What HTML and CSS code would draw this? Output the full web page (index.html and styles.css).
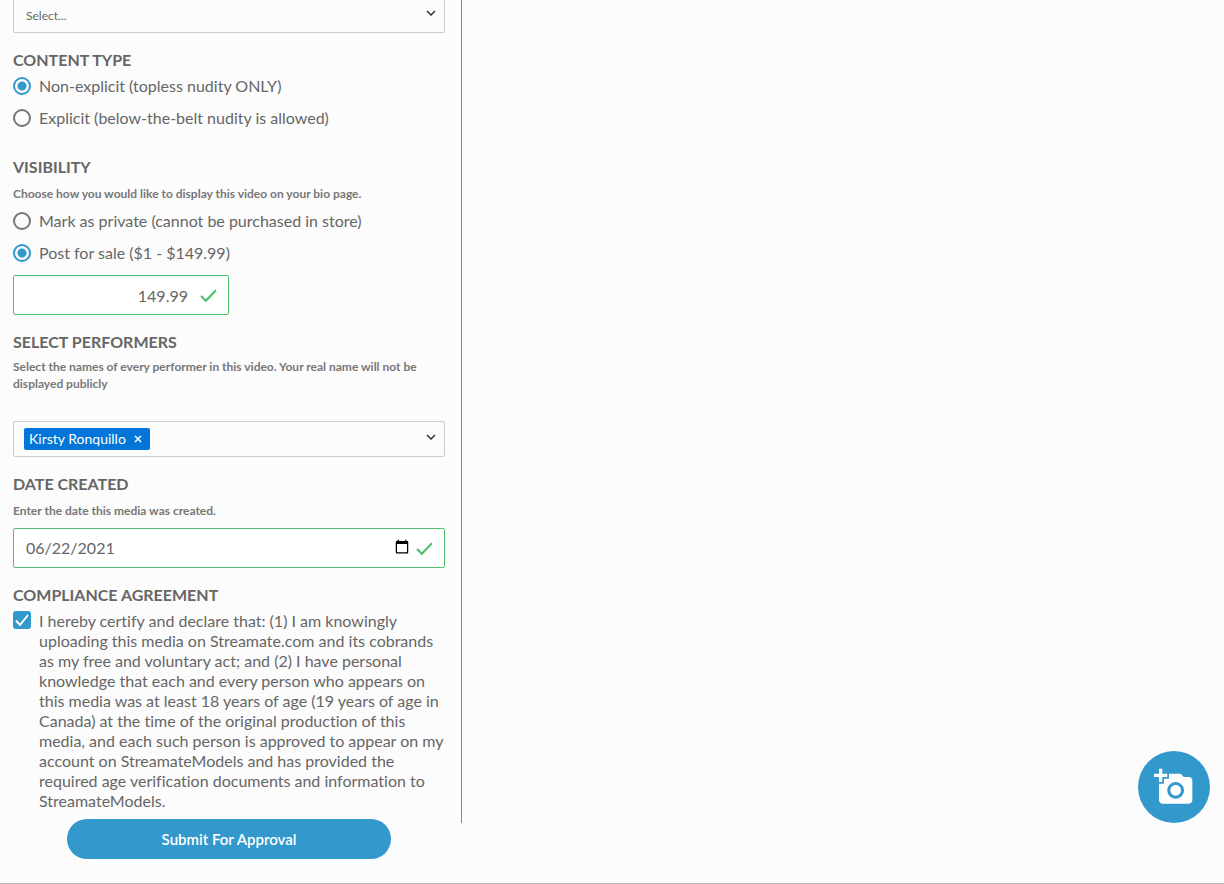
FILE: index.html
```html
<!DOCTYPE html>
<html lang="en">

<head>
  <meta charset="UTF-8">
  <meta name="viewport" content="width=device-width, initial-scale=1.0">
  <title>Upload Video</title>
  <link rel="stylesheet" href="styles.css">
</head>

<body>
  <form class="upload-form" id="upload-form">
    <div class="form-panel">
      <div class="select-wrap">
        <select class="select" id="category" aria-label="Category">
          <option>Select...</option>
        </select>
        <svg class="chevron" viewBox="0 0 10 6" aria-hidden="true"><path d="M1 1l4 4 4-4"/></svg>
      </div>

      <fieldset class="field field-content">
        <legend class="heading">CONTENT TYPE</legend>
        <div class="options">
          <label class="option"><input type="radio" name="content" checked> Non-explicit (topless nudity ONLY)</label>
          <label class="option"><input type="radio" name="content"> Explicit (below-the-belt nudity is allowed)</label>
        </div>
      </fieldset>

      <fieldset class="field">
        <legend class="heading">VISIBILITY</legend>
        <p class="hint">Choose how you would like to display this video on your bio page.</p>
        <div class="options">
          <label class="option"><input type="radio" name="visibility"> Mark as private (cannot be purchased in store)</label>
          <label class="option"><input type="radio" name="visibility" checked> Post for sale ($1 - $149.99)</label>
        </div>
        <div class="input-wrap price-wrap">
          <input class="input price" type="text" inputmode="decimal" value="149.99" aria-label="Price">
          <svg class="valid" viewBox="0 0 16 12" aria-hidden="true"><path d="M1 6.500l4.500 4.500L15 1"/></svg>
        </div>
      </fieldset>

      <div class="field field-performers">
        <label class="heading" for="performers">SELECT PERFORMERS</label>
        <p class="hint">Select the names of every performer in this video. Your real name will not be displayed publicly</p>
        <div class="select-wrap multi-select">
          <span class="chip">Kirsty Ronquillo
            <button class="chip-remove" type="button" aria-label="Remove Kirsty Ronquillo">
              <svg viewBox="0 0 8 8" aria-hidden="true"><path d="M1 1l6 6M7 1L1 7"/></svg>
            </button>
          </span>
          <input class="multi-input" type="text" id="performers">
          <svg class="chevron" viewBox="0 0 10 6" aria-hidden="true"><path d="M1 1l4 4 4-4"/></svg>
        </div>
      </div>

      <div class="field field-date">
        <label class="heading" for="date">DATE CREATED</label>
        <p class="hint">Enter the date this media was created.</p>
        <div class="input-wrap">
          <input class="input date" type="date" id="date" value="2021-06-22">
          <svg class="valid" viewBox="0 0 16 12" aria-hidden="true"><path d="M1 6.500l4.500 4.500L15 1"/></svg>
        </div>
      </div>

      <fieldset class="field field-agreement">
        <legend class="heading">COMPLIANCE AGREEMENT</legend>
        <label class="agreement">
          <span class="checkbox-wrap">
            <input type="checkbox" checked>
            <svg viewBox="0 0 18 18" aria-hidden="true"><path d="M3 9.500l4 4.500L15 4"/></svg>
          </span>
          <span>I hereby certify and declare that: (1) I am knowingly uploading this media on Streamate.com and its cobrands as my free and voluntary act; and (2) I have personal knowledge that each and every person who appears on this media was at least 18 years of age (19 years of age in Canada) at the time of the original production of this media, and each such person is approved to appear on my account on StreamateModels and has provided the required age verification documents and information to StreamateModels.</span>
        </label>
      </fieldset>
    </div>

    <div class="form-actions">
      <button class="submit" type="submit">Submit For Approval</button>
    </div>
  </form>

  <button class="add-photo" type="button" aria-label="Add photo">
    <svg viewBox="0 0 24 24" aria-hidden="true"><path d="M3 4V1h2v3h3v2H5v3H3V6H0V4h3zm3 6V7h3V4h7l1.830 2H21c1.100 0 2 .9 2 2v12c0 1.100-.9 2-2 2H5c-1.100 0-2-.9-2-2V10h3zm7 9c2.760 0 5-2.240 5-5s-2.240-5-5-5-5 2.240-5 5 2.240 5 5 5zm-3.200-5c0 1.770 1.430 3.200 3.200 3.200s3.200-1.430 3.200-3.200-1.430-3.200-3.200-3.200-3.200 1.430-3.200 3.200z"/></svg>
  </button>
</body>

</html>
```
FILE: styles.css
```css
* {
  box-sizing: border-box;
}

body {
  margin: 0;
  background-color: #fcfcfc;
  color: #666;
  font-family: Lato, "Liberation Sans", sans-serif;
  font-size: 16px;
  font-variant-ligatures: none;
  line-height: 20px;
}

input,
select,
button {
  margin: 0;
  font-family: inherit;
  color: inherit;
}

.upload-form {
  border-bottom: 1px solid #bbb;
}

.form-panel {
  width: 462px;
  max-width: 100%;
  padding: 0 16px 12px 13px;
  border-right: 1px solid #888;
}

/* fields */
.field {
  margin: 17px 0 0;
  padding: 0;
  border: 0;
  min-width: 0;
}

.heading {
  display: block;
  margin-bottom: 8px;
  padding: 0;
  font-weight: bold;
}

.field-content .heading {
  margin-bottom: 5px;
}

.field-performers .heading,
.field-agreement .heading {
  margin-bottom: 6px;
}

.hint {
  margin: 0 0 8px;
  color: #777;
  font-size: 12px;
  font-weight: bold;
  line-height: 17px;
}

.field-performers .hint {
  margin-bottom: 29px;
}

.field-date .hint {
  margin-bottom: 9px;
}

/* radios */
.options {
  display: flex;
  flex-direction: column;
  gap: 10px;
  padding-bottom: 11px;
}

.option {
  display: flex;
  align-items: center;
  gap: 8px;
  min-height: 22px;
}

input[type="radio"] {
  appearance: none;
  flex: none;
  width: 18px;
  height: 18px;
  border: 2px solid #757575;
  border-radius: 50%;
}

input[type="radio"]:checked {
  border-color: #3398cc;
  background: radial-gradient(circle, #3398cc 4px, transparent 5px);
}

/* selects */
.select-wrap {
  position: relative;
  border: 1px solid #ccc;
  border-radius: 2px;
}

.select-wrap:first-child {
  border-top: 0;
  border-radius: 0 0 2px 2px;
}

.select {
  display: block;
  appearance: none;
  width: 100%;
  height: 32px;
  padding: 0 32px 2px 12px;
  border: 0;
  background: none;
  font-size: 12px;
}

.chevron {
  position: absolute;
  top: 12px;
  right: 8px;
  width: 10px;
  height: 6px;
  fill: none;
  stroke: #333;
  stroke-width: 1.5;
  pointer-events: none;
}

.select + .chevron {
  top: 10px;
}

.multi-select {
  display: flex;
  align-items: center;
  height: 36px;
  padding: 0 32px 0 10px;
}

.chip {
  display: flex;
  align-items: center;
  gap: 8px;
  height: 22px;
  padding: 0 8px 0 5px;
  border-radius: 2px;
  background-color: #0275d8;
  color: #fff;
  font-size: 14px;
}

.chip-remove {
  display: flex;
  padding: 0;
  border: 0;
  background: none;
  cursor: pointer;
}

.chip-remove svg {
  width: 8px;
  height: 8px;
  stroke: #fff;
  stroke-width: 1.5;
}

.multi-input {
  flex: 1;
  min-width: 0;
  border: 0;
  outline: 0;
  background: none;
}

/* inputs */
.input-wrap {
  position: relative;
}

.price-wrap {
  width: 50%;
}

.input {
  display: block;
  width: 100%;
  height: 40px;
  padding: 0 40px 0 12px;
  border: 1px solid #4fc06f;
  border-radius: 2px;
  background-color: #fff;
  font-size: 16px;
}

.price {
  text-align: right;
}

.date {
  padding: 0 32px 2px 12px;
}

.date::-webkit-datetime-edit-fields-wrapper,
.date::-webkit-datetime-edit-month-field,
.date::-webkit-datetime-edit-day-field,
.date::-webkit-datetime-edit-year-field {
  padding: 0;
}

.valid {
  position: absolute;
  top: 14px;
  right: 12px;
  width: 17px;
  height: 13px;
  fill: none;
  stroke: #4fc06f;
  stroke-width: 2;
}

/* agreement */
.agreement {
  display: flex;
  align-items: flex-start;
  gap: 8px;
}

.checkbox-wrap {
  position: relative;
  flex: none;
  display: flex;
}

input[type="checkbox"] {
  appearance: none;
  width: 18px;
  height: 18px;
  border: 2px solid #757575;
  border-radius: 3px;
}

input[type="checkbox"]:checked {
  border-color: #3398cc;
  background-color: #3398cc;
}

.checkbox-wrap svg {
  position: absolute;
  inset: 0;
  fill: none;
  stroke: #fff;
  stroke-width: 2;
  pointer-events: none;
}

/* buttons */
.form-actions {
  display: flex;
  justify-content: center;
  width: 462px;
  max-width: 100%;
  margin-top: -4px;
  padding: 0 17px 24px 13px;
}

.submit {
  width: 75%;
  height: 40px;
  padding-bottom: 2px;
  border: 0;
  border-radius: 20px;
  background-color: #3398cc;
  color: #fff;
  font-size: 15px;
  font-weight: 600;
  cursor: pointer;
}

.add-photo {
  position: fixed;
  right: 14px;
  bottom: 61px;
  display: flex;
  align-items: center;
  justify-content: center;
  width: 72px;
  height: 72px;
  padding: 0;
  border: 0;
  border-radius: 50%;
  background-color: #3398cc;
  cursor: pointer;
}

.add-photo svg {
  width: 40px;
  height: 40px;
  fill: #fff;
}
```
